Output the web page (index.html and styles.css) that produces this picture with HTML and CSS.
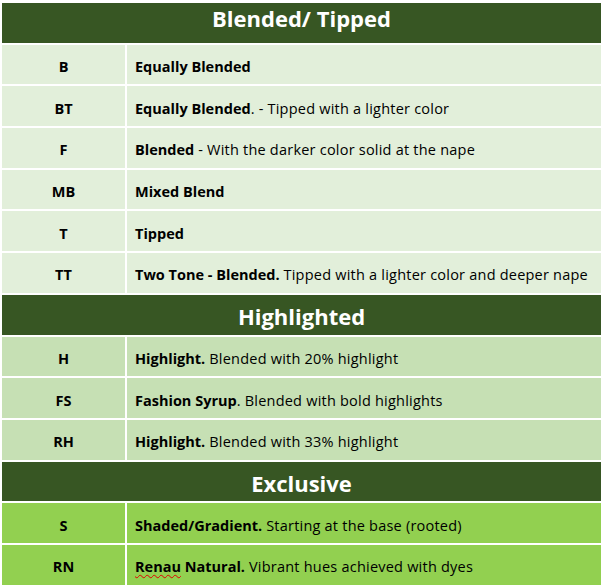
FILE: index.html
```html
<!DOCTYPE html>
<html>
<head>
<meta charset="utf-8">
<link rel="stylesheet" href="styles.css">
</head>
<body>
<div class="sheet">
  <div class="head first"><span>Blended/ Tipped</span></div>
  <div class="code r1"><span>B</span></div><div class="desc r1"><span><b>Equally Blended</b></span></div>
  <div class="code r1"><span>BT</span></div><div class="desc r1"><span><b>Equally Blended</b>. - Tipped with a lighter color</span></div>
  <div class="code r1"><span>F</span></div><div class="desc r1"><span><b>Blended</b> - With the darker color solid at the nape</span></div>
  <div class="code r1"><span>MB</span></div><div class="desc r1"><span><b>Mixed Blend</b></span></div>
  <div class="code r1"><span>T</span></div><div class="desc r1"><span><b>Tipped</b></span></div>
  <div class="code r1"><span>TT</span></div><div class="desc r1"><span><b>Two Tone - Blended.</b> Tipped with a lighter color and deeper nape</span></div>
  <div class="head"><span>Highlighted</span></div>
  <div class="code r2"><span>H</span></div><div class="desc r2"><span><b>Highlight.</b> Blended with 20% highlight</span></div>
  <div class="code r2"><span>FS</span></div><div class="desc r2"><span><b>Fashion Syrup</b>. Blended with bold highlights</span></div>
  <div class="code r2"><span>RH</span></div><div class="desc r2"><span><b>Highlight.</b> Blended with 33% highlight</span></div>
  <div class="head"><span>Exclusive</span></div>
  <div class="code r3"><span>S</span></div><div class="desc r3"><span><b>Shaded/Gradient.</b> Starting at the base (rooted)</span></div>
  <div class="code r3"><span>RN</span></div><div class="desc r3"><span><b><span class="spell">Renau</span> Natural.</b> Vibrant hues achieved with dyes</span></div>
</div>
</body>
</html>
```

FILE: styles.css
```css
html, body {
  margin: 0;
  padding: 0;
  background: #ffffff;
}
body {
  padding: 3px 1px 0 2px;
  font-family: "Open Sans", Lato, "Liberation Sans", sans-serif;
  color: #000000;
}
.sheet {
  display: grid;
  grid-template-columns: 123px 1fr;
  grid-auto-rows: 39.7px;
  gap: 2px 2px;
  width: 599px;
}
.head {
  grid-column: 1 / 3;
  background: #375623;
  color: #ffffff;
  font-weight: 700;
  font-size: 22px;
  display: flex;
  align-items: center;
  justify-content: center;
  padding-top: 3px;
  box-sizing: border-box;
}
.head.first {
  padding-top: 0;
  padding-bottom: 9px;
}
.code, .desc {
  display: flex;
  align-items: center;
  font-size: 14.5px;
  padding-top: 4px;
  box-sizing: border-box;
}
.code {
  justify-content: center;
  font-weight: 700;
}
.desc {
  padding-left: 8px;
  white-space: nowrap;
  letter-spacing: 0.22px;
}
.desc b {
  letter-spacing: 0;
}
.r1 { background: #e2efda; }
.r2 { background: #c6e0b4; }
.r3 { background: #92d050; }
.spell {
  text-decoration: underline wavy #e00000;
  text-decoration-thickness: 1px;
  text-underline-offset: 2px;
}
```
